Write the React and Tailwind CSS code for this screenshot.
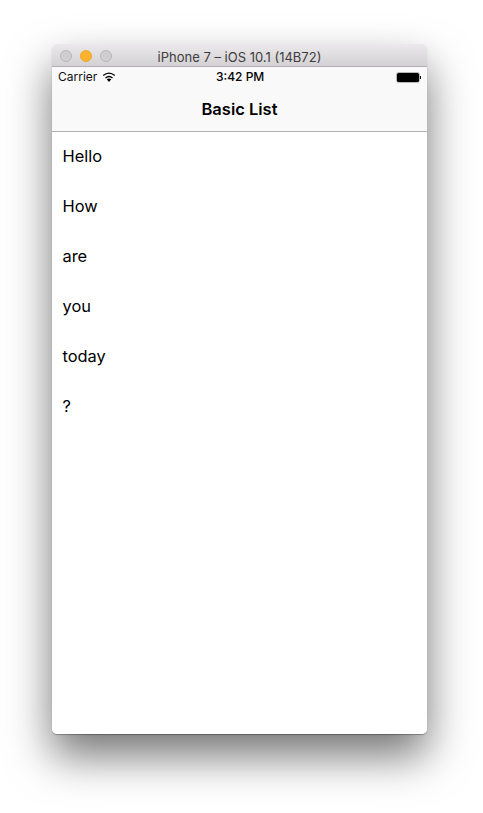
const rows = ["Hello", "How", "are", "you", "today", "?"];

function Wifi() {
  return (
    <svg width="14" height="10" viewBox="0 0 14 10" className="ml-[5px]">
      <path d="M7 10 L4.7 7.3 Q7 5.6 9.3 7.3 Z" fill="#000" />
      <path d="M3.5 5.9 Q7 3.1 10.5 5.9" fill="none" stroke="#000" strokeWidth="1.3" />
      <path d="M1.2 3.5 Q7 -1.2 12.8 3.5" fill="none" stroke="#000" strokeWidth="1.3" />
    </svg>
  );
}

function Battery() {
  return (
    <div className="flex items-center">
      <div className="w-[22px] h-[9px] bg-black rounded-[1.5px] outline outline-1 outline-[#555]/40" />
      <div className="w-[1px] h-[3px] ml-[1px] bg-black" />
    </div>
  );
}

export default function App() {
  return (
    <div className="w-[483px] h-[813px] overflow-hidden bg-white pt-[44px] pl-[52px] font-['Inter',sans-serif]">
      <div className="w-[375px] h-[690px] flex flex-col bg-white rounded-[5px] overflow-hidden shadow-[0_22px_44px_rgba(0,0,0,0.54),0_1px_1px_rgba(0,0,0,0.3)]">
        <div className="h-[23px] shrink-0 flex items-center relative pt-[1px] bg-gradient-to-b from-[#ebe9eb] to-[#d3d1d3] border-b border-[#b1afb1]">
          <div className="flex gap-[8px] pl-[8px]">
            <div className="w-[12px] h-[12px] rounded-full bg-[#d0ced0] border border-[#b9b7b9]" />
            <div className="w-[12px] h-[12px] rounded-full bg-[#fdb32e] border border-[#eda92c]" />
            <div className="w-[12px] h-[12px] rounded-full bg-[#d0ced0] border border-[#b9b7b9]" />
          </div>
          <div className="absolute inset-x-0 top-[2px] text-center text-[13px] leading-[22px] text-[#3e3c3e] whitespace-nowrap">iPhone 7 – iOS 10.1 (14B72)</div>
        </div>
        <div className="h-[65px] shrink-0 bg-[#f9f9f9] border-b border-[#b2b2b2] flex flex-col">
          <div className="h-[20px] px-[6px] flex items-center justify-between relative">
            <div className="flex items-center text-[12px] text-[#111]">
              <span>Carrier</span>
              <Wifi />
            </div>
            <div className="text-[12px] font-[550] text-black absolute left-[164px]">3:42 PM</div>
            <Battery />
          </div>
          <div className="flex-1 flex items-center justify-center text-[16.5px] font-semibold text-black">Basic List</div>
        </div>
        <div className="flex-1 bg-white">
          {rows.map((r) => (
            <div key={r} className="h-[50px] pl-[10.5px] pb-[2px] flex items-center text-[16.4px] font-[370] text-black">{r}</div>
          ))}
        </div>
      </div>
    </div>
  );
}
